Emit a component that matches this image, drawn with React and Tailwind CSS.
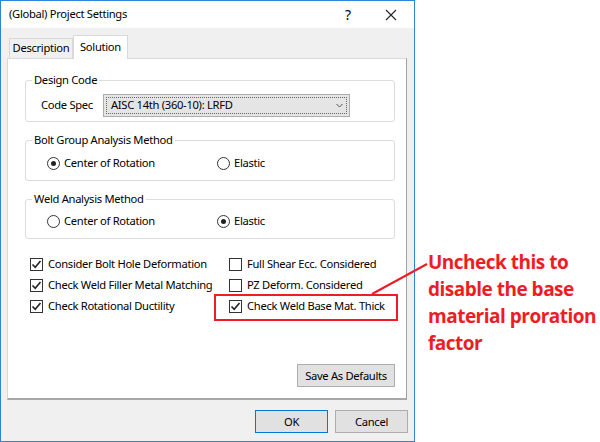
import React from 'react';

const FONT = { fontFamily: '"Noto Sans", "Open Sans", sans-serif' };

const Check = ({ checked }) => (
    <span className="w-[13px] h-[13px] border border-[#333] bg-white flex items-center justify-center shrink-0">
        {checked && (
            <svg width="11" height="11" viewBox="0 0 11 11">
                <path d="M1.5 5.5 L4.2 8.3 L9.5 2" fill="none" stroke="#222" strokeWidth="1.6" />
            </svg>
        )}
    </span>
);

const Radio = ({ checked }) => (
    <span className="w-[13px] h-[13px] rounded-full border border-[#333] bg-white flex items-center justify-center shrink-0">
        {checked && <span className="w-[5px] h-[5px] rounded-full bg-[#222]" />}
    </span>
);

const Group = ({ title, children, className }) => (
    <fieldset className={`border border-[#dcdcdc] rounded-[3px] ${className}`}>
        <legend className="ml-[6px] px-[2px] leading-[16px]">{title}</legend>
        {children}
    </fieldset>
);

const RadioRow = ({ first }) => (
    <div className="flex items-center h-[16px] pl-[21px]">
        <div className="flex items-center gap-[4px] w-[170px]">
            <Radio checked={first} />
            <span>Center of Rotation</span>
        </div>
        <div className="flex items-center gap-[4px]">
            <Radio checked={!first} />
            <span>Elastic</span>
        </div>
    </div>
);

const CheckItem = ({ label, checked }) => (
    <div className="flex items-center gap-[5px] h-[16px] whitespace-nowrap">
        <Check checked={checked} />
        <span>{label}</span>
    </div>
);

const Button = ({ children, className }) => (
    <button className={`h-[23px] border bg-[#e1e1e1] leading-none ${className}`}>{children}</button>
);

export default function App() {
    return (
        <div className="relative w-[600px] h-[442px] bg-white flex text-[11.2px] tracking-[-0.3px] text-black" style={FONT}>
            {/* dialog window */}
            <div className="w-[415px] h-[442px] border border-[#2a86d8] bg-[#f0f0f0] flex flex-col">
                <div className="h-[27px] bg-white flex items-center pl-[8px] shrink-0">
                    <span className="flex-1">(Global) Project Settings</span>
                    <span className="w-[40px] text-center text-[14px]">?</span>
                    <span className="w-[46px] flex justify-center">
                        <svg width="12" height="12" viewBox="0 0 12 12">
                            <path d="M1 1 L11 11 M11 1 L1 11" stroke="#222" strokeWidth="1.1" />
                        </svg>
                    </span>
                </div>

                {/* tabs */}
                <div className="flex items-end ml-[8px] mt-[7px] h-[23px] relative z-10">
                    <div className="h-[20px] w-[64px] border border-b-0 border-[#d9d9d9] bg-[#f0f0f0] flex items-center justify-center">
                        Description
                    </div>
                    <div className="h-[24px] w-[55px] border border-b-0 border-[#d9d9d9] bg-white flex items-center justify-center -mb-px">
                        Solution
                    </div>
                </div>

                {/* panel */}
                <div className="ml-[6px] w-[400px] h-[342px] bg-white border border-[#d9d9d9] border-r-[#a0a0a0] border-b-2 border-b-[#a8a8a8] flex flex-col pl-[17px] pr-[11px]">
                    <Group title="Design Code" className="mt-[13px] pb-[4px]">
                        <div className="flex items-center mt-[6px] pl-[15px]">
                            <span className="w-[62px]">Code Spec</span>
                            <div className="w-[247px] h-[23px] bg-[#e5e5e5] border border-[#acacac] p-[2px]">
                                <div className="h-full border border-dotted border-[#666] flex items-center pl-[4px] pr-[3px]">
                                    <span className="flex-1">AISC 14th (360-10): LRFD</span>
                                    <svg width="7" height="5" viewBox="0 0 7 5">
                                        <path d="M0.5 1 L3.5 4 L6.5 1" fill="none" stroke="#555" strokeWidth="1" />
                                    </svg>
                                </div>
                            </div>
                        </div>
                    </Group>

                    <Group title="Bolt Group Analysis Method" className="mt-[10px] pb-[9px]">
                        <div className="mt-[7px]">
                            <RadioRow first />
                        </div>
                    </Group>

                    <Group title="Weld Analysis Method" className="mt-[10px] pb-[9px]">
                        <div className="mt-[6px]">
                            <RadioRow first={false} />
                        </div>
                    </Group>

                    <div className="grid grid-cols-[199px_1fr] gap-y-[5px] mt-[17px] pl-[5px]">
                        <CheckItem label="Consider Bolt Hole Deformation" checked />
                        <CheckItem label="Full Shear Ecc. Considered" />
                        <CheckItem label="Check Weld Filler Metal Matching" checked />
                        <CheckItem label="PZ Deform. Considered" />
                        <CheckItem label="Check Rotational Ductility" checked />
                        <div className="relative">
                            <CheckItem label="Check Weld Base Mat. Thick" checked />
                            <div className="absolute left-[-15px] top-[-4px] w-[184px] h-[27px] border-2 border-[#ee1c24]" />
                        </div>
                    </div>

                    <div className="mt-auto mb-[11px] flex justify-end">
                        <Button className="w-[98px] border-[#adadad]">Save As Defaults</Button>
                    </div>
                </div>

                {/* footer buttons */}
                <div className="flex justify-end gap-[7px] mt-[10px] pr-[6px]">
                    <Button className="w-[73px] border-[#0078d7]">OK</Button>
                    <Button className="w-[73px] border-[#adadad]">Cancel</Button>
                </div>
            </div>

            {/* annotation */}
            <div className="pl-[13px] pt-[249px] text-[#ee1c24] font-bold text-[19px] leading-[27px] tracking-[-0.5px]" style={{ fontFamily: '"Open Sans", sans-serif' }}>
                <div>Uncheck this to</div>
                <div>disable the base</div>
                <div>material proration</div>
                <div>factor</div>
            </div>

            <svg className="absolute left-0 top-0 pointer-events-none" width="600" height="442">
                <line x1="372" y1="294" x2="427" y2="264" stroke="#ee1c24" strokeWidth="2" />
            </svg>
        </div>
    );
}
